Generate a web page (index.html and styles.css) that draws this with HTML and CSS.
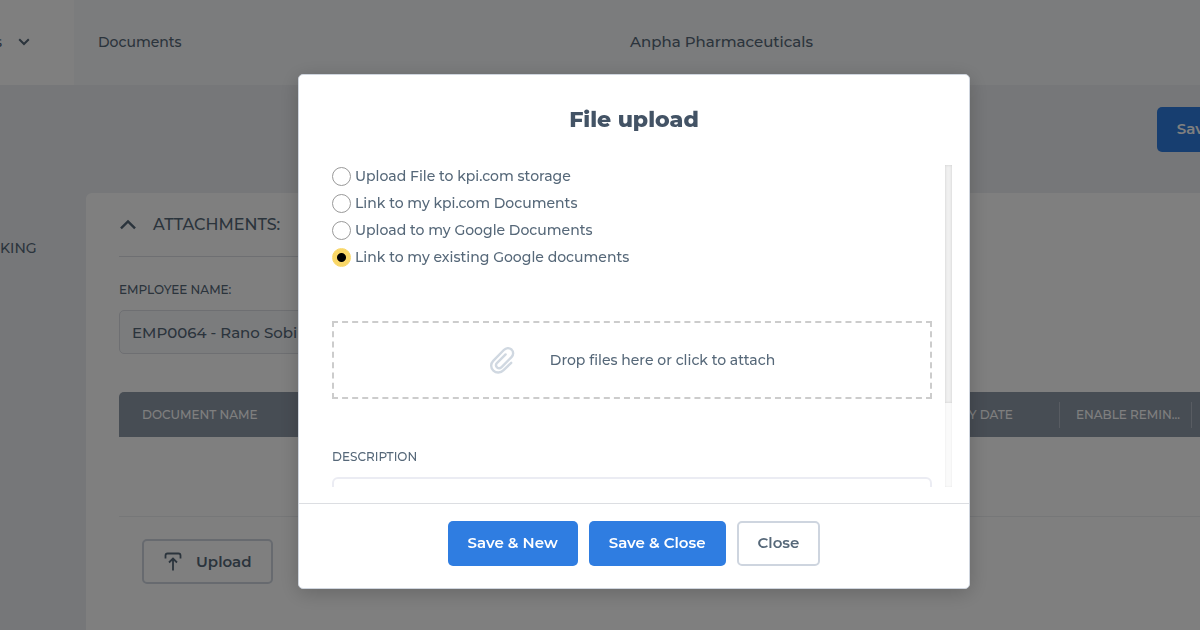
FILE: index.html
```
<!DOCTYPE html>
<html lang="en">
<head>
    <meta charset="UTF-8">
    <title>Documents</title>
    <meta name="viewport" content="width=device-width, initial-scale=1.0">
    <link rel="stylesheet" href="styles.css">
</head>
<body>
    <header class="topbar">
        <button type="button" class="topbar-menu">
            <span>s</span>
            <svg width="12" height="8" viewBox="0 0 12 8" fill="none" stroke="currentColor" stroke-width="2"><path d="M1.2 1.2 6 6l4.800-4.800"/></svg>
        </button>
        <div class="topbar-title">Documents</div>
        <div class="topbar-company">Anpha Pharmaceuticals</div>
    </header>
    <div class="layout">
        <nav class="sidebar">
            <a href="#">KING</a>
        </nav>
        <main class="content">
            <div class="toolbar">
                <button type="button" class="btn btn-primary">Save</button>
            </div>
            <section class="panel">
                <div class="section">
                    <h2 class="section-title">
                        <svg width="18" height="11" viewBox="0 0 16 10" fill="none" stroke="currentColor" stroke-width="2.200"><path d="M1.600 8.600 8 2.200l6.400 6.400"/></svg>
                        ATTACHMENTS:
                    </h2>
                    <label class="field-label" for="employee">EMPLOYEE NAME:</label>
                    <input type="text" class="field-input" id="employee" value="EMP0064 - Rano Sobi" readonly>
                </div>
                <table class="doc-table">
                    <thead>
                        <tr>
                            <th class="col-name">DOCUMENT NAME</th>
                            <th class="col-date">EXPIRY DATE</th>
                            <th class="col-remind">ENABLE REMIN...</th>
                            <th class="col-last"></th>
                        </tr>
                    </thead>
                    <tbody>
                        <tr>
                            <td colspan="4"></td>
                        </tr>
                    </tbody>
                </table>
                <button type="button" class="btn btn-outline btn-upload">
                    <svg width="18" height="19" viewBox="0 0 18 19" fill="none" stroke="currentColor" stroke-width="1.800"><path d="M1.500 6.500V3.500Q1.500 1.500 3.500 1.500h11Q16.500 1.500 16.500 3.500v3M9 18.500V7M5 10.500 9 6.500l4 4"/></svg>
                    Upload
                </button>
            </section>
        </main>
    </div>

    <div class="overlay">
        <form class="modal" role="dialog" aria-labelledby="modal-title">
            <h1 class="modal-title" id="modal-title">File upload</h1>
            <div class="modal-body">
                <div class="modal-scroll">
                    <div class="options">
                        <label class="option"><input type="radio" name="source"> Upload File to kpi.com storage</label>
                        <label class="option"><input type="radio" name="source"> Link to my kpi.com Documents</label>
                        <label class="option"><input type="radio" name="source"> Upload to my Google Documents</label>
                        <label class="option"><input type="radio" name="source" checked> Link to my existing Google documents</label>
                    </div>
                    <button type="button" class="dropzone">
                        <svg width="26" height="28" viewBox="0 0 26 28" fill="none" stroke="currentColor" stroke-width="2.400" stroke-linecap="round" stroke-linejoin="round"><path d="M22.200 16.800 14.600 24.200C11.600 27.200 7.200 27.300 4.400 24.700C1.500 22 1.400 17.700 4.200 14.800L14.800 4C17 1.700 20.300 1.500 22.500 3.500C24.700 5.600 24.700 8.800 22.500 11.100L12.600 21.100C11.200 22.500 9.200 22.500 8 21.300C6.700 20 6.800 18.200 8.100 16.800L16.600 8.400"/></svg>
                        Drop files here or click to attach
                    </button>
                    <label class="field-label" for="description">DESCRIPTION</label>
                    <textarea class="description" id="description"></textarea>
                </div>
                <div class="scroll-track">
                    <div class="scroll-thumb"></div>
                </div>
            </div>
            <div class="modal-footer">
                <button type="button" class="btn btn-primary">Save &amp; New</button>
                <button type="button" class="btn btn-primary">Save &amp; Close</button>
                <button type="button" class="btn btn-outline">Close</button>
            </div>
        </form>
    </div>
</body>
</html>
```

FILE: styles.css
```
* {
    box-sizing: border-box;
}
html, body {
    height: 100%;
    margin: 0;
    overflow: hidden;
}
body {
    display: flex;
    flex-direction: column;
    background: #edeff2;
    color: #566879;
    font-family: Montserrat, Inter, sans-serif;
    font-size: 14px;
    font-weight: 500;
}
button, input, textarea {
    font: inherit;
    color: inherit;
}
svg {
    flex: none;
}

/* top bar */
.topbar {
    display: grid;
    grid-template-columns: 74px 1fr 1fr;
    align-items: center;
    height: 85px;
    padding: 0 14px 2px 0;
    flex: none;
    background: linear-gradient(90deg, #fff 74px, #f7f8fa 74px);
}
.topbar-menu {
    display: flex;
    align-items: center;
    justify-content: flex-end;
    gap: 16px;
    height: 100%;
    padding: 0 44px 0 0;
    border: none;
    background: none;
    overflow: hidden;
}
.topbar-title {
    padding-left: 24px;
}
.topbar-company {
    font-size: 15px;
}

/* page */
.layout {
    display: flex;
    flex: 1;
}
.sidebar {
    width: 86px;
    padding-top: 152px;
    flex: none;
}
.sidebar a {
    display: block;
    line-height: 22px;
    color: inherit;
    text-decoration: none;
}
.content {
    display: flex;
    flex-direction: column;
    flex: 1;
    min-width: 0;
}
.toolbar {
    display: flex;
    justify-content: flex-end;
    padding: 22px 0 41px;
    margin-right: -33px;
}
.panel {
    flex: 1;
    padding: 16px 0 0 33px;
    background: #fff;
    border-radius: 6px 0 0 0;
}
.section {
    width: 50%;
}
.section-title {
    display: flex;
    align-items: center;
    gap: 16px;
    height: 48px;
    margin: 0 0 24px;
    padding-bottom: 16px;
    border-bottom: 1px solid #dcdfe5;
    font-size: 16px;
    font-weight: 500;
}
.field-label {
    display: block;
    margin-bottom: 11px;
    font-size: 12px;
    line-height: 18px;
}
.field-input {
    width: 280px;
    height: 44px;
    padding: 0 12px;
    border: 1px solid #dcdfe5;
    border-radius: 5px;
    background: #f7f8fb;
    font-size: 15px;
}
.doc-table {
    width: 100%;
    margin-top: 38px;
    border-collapse: collapse;
    table-layout: fixed;
}
.doc-table th {
    height: 45px;
    padding: 0 16px;
    background: linear-gradient(#b0b8c4, #b0b8c4) right / 1px 26px no-repeat #8f9aa8;
    color: #fff;
    font-size: 12px;
    font-weight: 500;
    text-align: left;
    white-space: nowrap;
}
.doc-table .col-name {
    padding-left: 23px;
    background: #8f9aa8;
    border-radius: 5px 0 0 0;
}
.doc-table .col-date {
    width: 148px;
    padding-left: 20px;
}
.col-remind {
    width: 132px;
}
.doc-table .col-last {
    width: 8px;
    padding: 0;
    background: #8f9aa8;
}
.doc-table td {
    height: 79px;
    border-bottom: 1px solid #eceef1;
}

/* buttons */
.btn {
    height: 45px;
    padding: 0 20px 2px;
    border: none;
    border-radius: 5px;
    font-size: 15px;
    font-weight: 600;
}
.btn-primary {
    background: #2f7de1;
    color: #fff;
}
.btn-outline {
    padding: 0 19px 2px;
    border: 2px solid #ced5df;
    background: transparent;
}
.btn-upload {
    display: flex;
    align-items: center;
    gap: 14px;
    margin: 22px 0 0 23px;
    padding: 0 20px;
}

/* modal */
.overlay {
    position: fixed;
    inset: 0;
    display: flex;
    align-items: flex-start;
    justify-content: center;
    padding: 74px 0 0 68px;
    background: rgba(0, 0, 0, 0.5);
}
.modal {
    width: 56vw;
    background: #fff;
    border: 1px solid #cfd5de;
    border-radius: 5px;
    box-shadow: 0 4px 20px rgba(0, 0, 0, 0.2);
}
.modal-title {
    margin: 0;
    padding: 30px 0;
    color: #435365;
    font-size: 22px;
    font-weight: 800;
    line-height: 30px;
    text-align: center;
}
.modal-body {
    display: flex;
    gap: 13px;
    height: 322px;
    margin: 0 17px 16px 33px;
}
.modal-scroll {
    flex: 1;
    overflow-y: auto;
    scrollbar-width: none;
}
.scroll-track {
    width: 7px;
    background: #fafafa;
    box-shadow: inset 0 0 2px rgba(0, 0, 0, 0.1);
}
.scroll-thumb {
    height: 74%;
    background: #f0f0f0;
    box-shadow: inset 0 0 3px rgba(0, 0, 0, 0.15);
}
.options {
    display: flex;
    flex-direction: column;
    align-items: flex-start;
    gap: 5px;
}
.option {
    display: flex;
    align-items: center;
    gap: 4px;
    line-height: 22px;
}
.option input {
    appearance: none;
    width: 19px;
    height: 19px;
    margin: 0;
    border: 1px solid #999;
    border-radius: 50%;
}
.option input:checked {
    border-color: #f9d768;
    background: radial-gradient(circle, #000 0 4px, #f9d768 5px);
}
.dropzone {
    display: flex;
    align-items: center;
    justify-content: center;
    gap: 35px;
    width: 100%;
    height: 78px;
    margin: 53px 0 49px;
    border: 2px dashed #ccc;
    background: none;
}
.dropzone svg {
    color: #d0d8e1;
}
.description {
    display: block;
    width: 100%;
    height: 120px;
    border: 2px solid #ebecf3;
    border-radius: 6px;
    resize: none;
}
.modal-footer {
    display: flex;
    justify-content: center;
    gap: 11px;
    padding: 17px 0 22px;
    border-top: 1px solid #dcdee2;
}
```
